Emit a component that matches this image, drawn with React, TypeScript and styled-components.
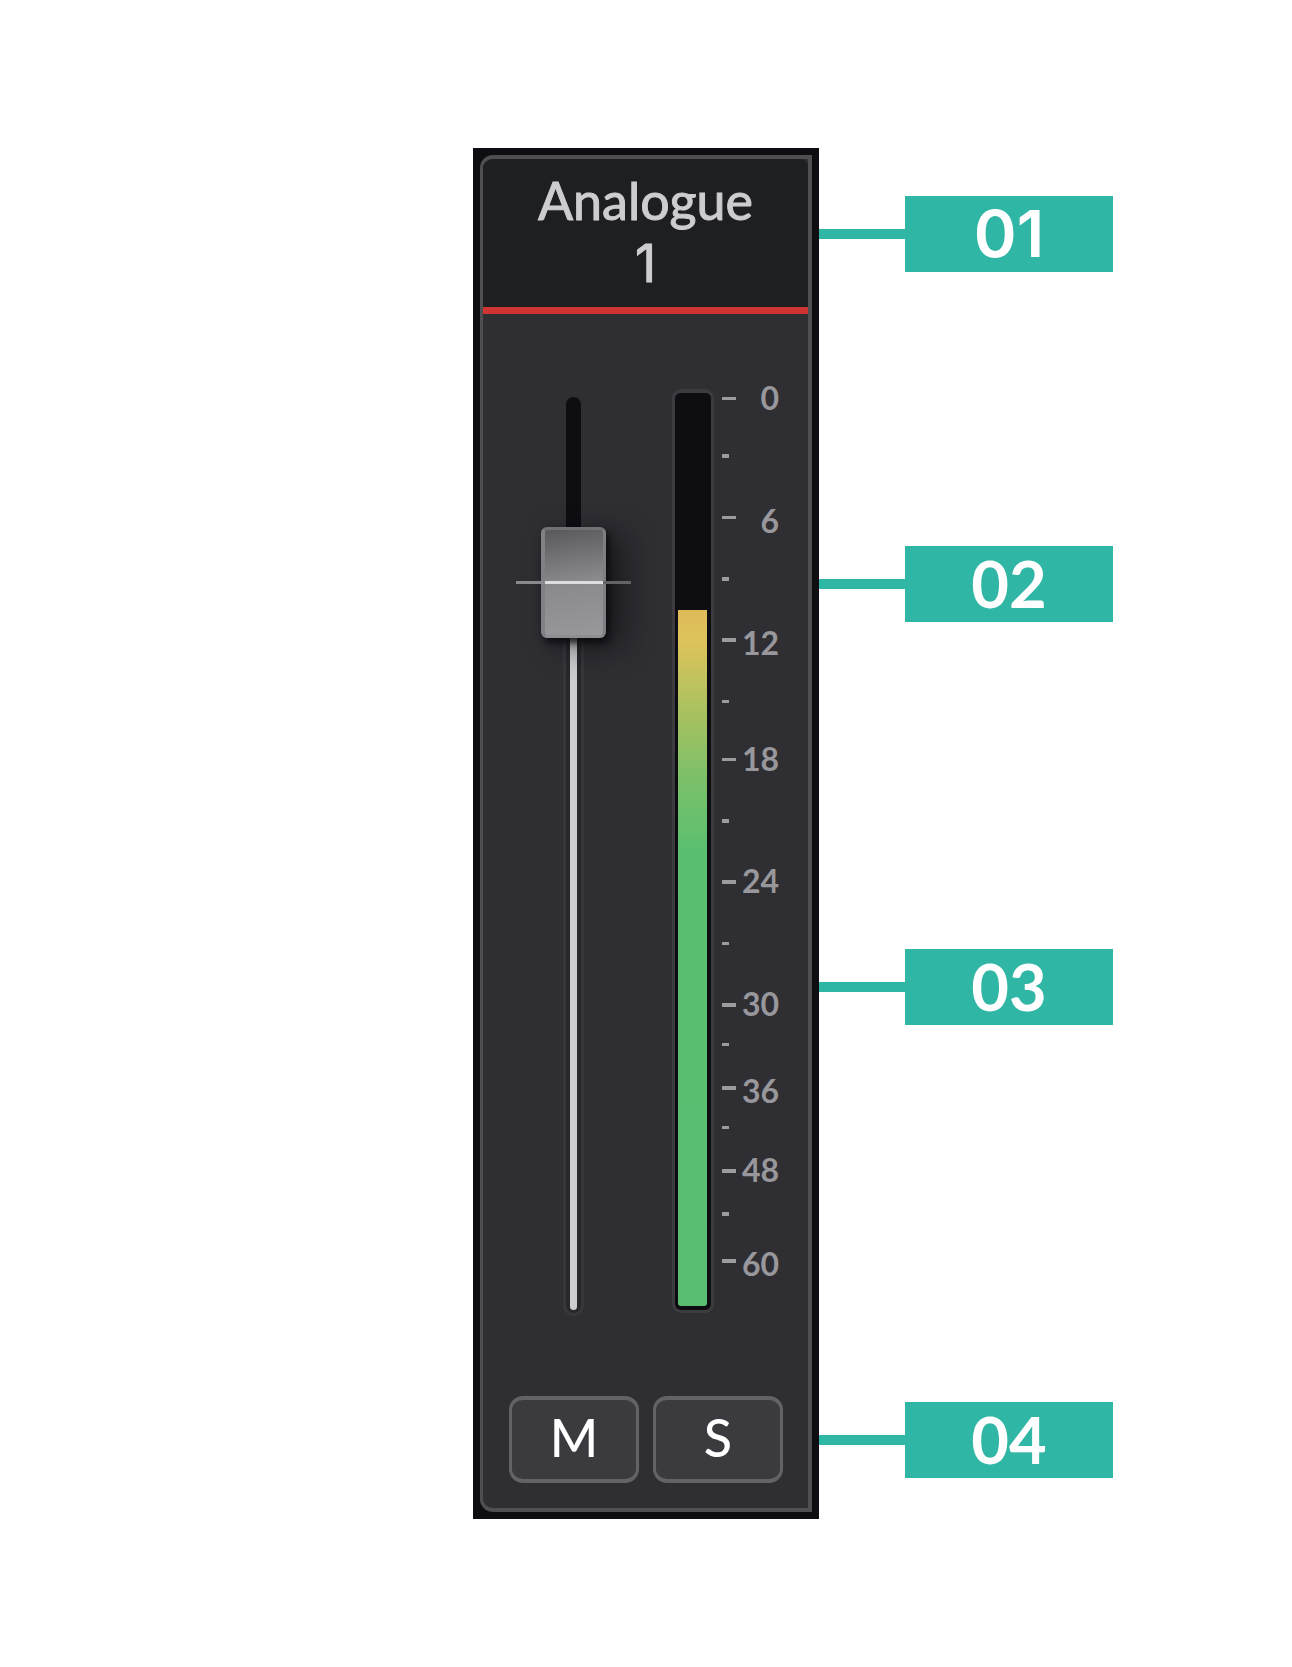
import React, { useState } from "react";
import styled, { createGlobalStyle } from "styled-components";

const GlobalStyle = createGlobalStyle`
  *, *::before, *::after { box-sizing: border-box; }
  body { margin: 0; background: #ffffff; }
`;

const TEXT = `Lato, "Open Sans", sans-serif`;
const PLAIN_ONE = `Inter, Roboto, sans-serif`;
const TEAL = "#30b6a5";

const Page = styled.main`
  display: grid;
  grid-template-columns: 1fr 346px 1fr;
  padding: 148px 0;
  font-family: ${TEXT};
`;

const Frame = styled.section`
  grid-column: 2;
  padding: 7px;
  background: #0e0d12;
`;

const Strip = styled.div`
  display: flex;
  flex-direction: column;
  border: solid #4f4e53;
  border-width: 4px 4px 4px 3px;
  border-radius: 13px 0 0 13px;
  background: #2f2e33;
  overflow: hidden;
`;

const Header = styled.header`
  height: 155px;
  padding-top: 10px;
  border-bottom: 7px solid #d03430;
  border-radius: 0 8px 0 0;
  background: #1e1f23;
  color: #cdcdcf;
  text-align: center;
`;

const Title = styled.h1`
  margin: 0;
  font-size: 52px;
  line-height: 62px;
  font-weight: 400;
  -webkit-text-stroke: 1px currentColor;
`;

const TitleNumber = styled.span`
  display: block;
  margin-top: 2px;
  font-family: ${PLAIN_ONE};
`;

const Controls = styled.div`
  display: flex;
  align-items: flex-end;
  padding: 75px 29px 0 33px;
`;

const FaderBox = styled.div`
  position: relative;
  width: 115px;
  height: 916px;
  margin-right: 41px;
`;

const Slot = styled.div`
  width: 15px;
  height: 100%;
  margin: 0 auto;
  border-radius: 8px;
  background: #0e0d12;
`;

const SlotFill = styled.div`
  position: absolute;
  left: 50px;
  right: 50px;
  bottom: 0;
  border-radius: 0 0 8px 8px;
  padding: 0 4px 3px;
  background: #28272c;
  box-shadow: 0 0 0 3px #37363b;

  &::before {
    content: "";
    display: block;
    height: 100%;
    border-radius: 0 0 4px 4px;
    background: #cdcdcf;
  }
`;

const Cap = styled.div`
  position: absolute;
  left: 25px;
  width: 65px;
  height: 111px;
  border: solid;
  border-width: 3px 3px 3px 4px;
  border-color: #717175 #7f7f83 #8e8e92 #818185;
  border-radius: 6px;
  background: linear-gradient(170deg, #59595d 0%, #8a8a8e 50%, #98979c 100%);
  box-shadow: 3px 5px 7px rgba(8, 8, 12, 0.8), 16px 8px 32px rgba(8, 8, 12, 0.6);
`;

const CapLine = styled.div`
  position: absolute;
  left: 0;
  right: 0;
  height: 3px;
  background: linear-gradient(
    to right,
    #8a898d 0 29px,
    #dddce0 29px 87px,
    #636267 87px
  );
`;

const FaderInput = styled.input`
  position: absolute;
  inset: 0;
  width: 100%;
  height: 100%;
  margin: 0;
  writing-mode: vertical-lr;
  direction: rtl;
  opacity: 0;
  cursor: pointer;
`;

const Meter = styled.div`
  display: flex;
  align-items: flex-end;
  width: 42px;
  height: 924px;
  margin-right: 8px;
  padding: 0 4px 4px 3px;
  border: solid #3c3b40;
  border-width: 4px 3px 3px;
  border-radius: 9px;
  background: #0e0d12;
`;

const MeterLevel = styled.div`
  width: 100%;
  border-radius: 0 0 3px 3px;
  background: linear-gradient(
    to bottom,
    #dfba59 0,
    #dec35b 30px,
    #9fc161 115px,
    #7bc069 170px,
    #5abf70 240px,
    #59be72 100%
  );
`;

const Scale = styled.div`
  display: flex;
  justify-content: space-between;
  align-self: flex-start;
  flex: 1;
`;

const Ticks = styled.div`
  padding-top: 8px;
`;

const TickRow = styled.div<{ $space: number }>`
  height: ${(p) => p.$space}px;
`;

const Tick = styled.div<{ $major?: boolean; $thick?: boolean }>`
  width: ${(p) => (p.$major ? 14 : 7)}px;
  height: ${(p) => (p.$thick ? 4 : 3)}px;
  background: #9c9ba0;
`;

const Labels = styled.div`
  margin-top: -11px;
  color: #98979c;
  font-size: 32px;
  line-height: 40px;
  font-weight: 700;
  text-align: right;
`;

const Label = styled.div<{ $space: number }>`
  height: ${(p) => p.$space}px;
`;

const Buttons = styled.div`
  display: flex;
  gap: 14px;
  padding: 83px 25px 25px 26px;
`;

const StripButton = styled.button`
  flex: 1;
  height: 87px;
  padding: 0 0 6px;
  border: solid #636266;
  border-width: 4px 3px 4px;
  border-radius: 14px;
  background: #3b3a3f;
  color: #ffffff;
  font-family: ${TEXT};
  font-size: 52px;
  line-height: 62px;
  font-weight: 500;
  cursor: pointer;
`;

const Callouts = styled.ol`
  grid-column: 3;
  margin: 0;
  padding: 0;
  list-style: none;
`;

const Callout = styled.li<{ $space: number }>`
  display: flex;
  align-items: center;
  padding-top: ${(p) => p.$space}px;
`;

const Leader = styled.span`
  width: 86px;
  height: 10px;
  background: ${TEAL};
`;

const Badge = styled.span<{ $plain?: boolean }>`
  width: 208px;
  height: 76px;
  background: ${TEAL};
  color: #ffffff;
  font-family: ${(p) => (p.$plain ? PLAIN_ONE : TEXT)};
  font-size: 65px;
  line-height: ${(p) => (p.$plain ? 76 : 74)}px;
  font-weight: ${(p) => (p.$plain ? 600 : 700)};
  text-align: center;
`;

const TICKS = [
  { space: 57, major: true },
  { space: 62, thick: true },
  { space: 61, major: true },
  { space: 61, thick: true },
  { space: 62, major: true, thick: true },
  { space: 58 },
  { space: 61, major: true },
  { space: 61, thick: true },
  { space: 62, major: true, thick: true },
  { space: 61 },
  { space: 40, major: true, thick: true },
  { space: 43 },
  { space: 40, major: true, thick: true },
  { space: 43 },
  { space: 43, major: true, thick: true },
  { space: 47, thick: true },
  { space: 4, major: true, thick: true },
];

const LABELS = [
  { text: "0", space: 123 },
  { text: "6", space: 122 },
  { text: "12", space: 116 },
  { text: "18", space: 122 },
  { text: "24", space: 123 },
  { text: "30", space: 87 },
  { text: "36", space: 79 },
  { text: "48", space: 94 },
  { text: "60", space: 40 },
];

const CALLOUTS = [
  { text: "01", space: 48, plain: true },
  { text: "02", space: 274 },
  { text: "03", space: 327 },
  { text: "04", space: 377 },
];

const FADER_TRAVEL = 805;
const CAP_HEIGHT = 111;

function Fader() {
  const [level, setLevel] = useState(675);
  const top = FADER_TRAVEL - level;
  return (
    <FaderBox>
      <Slot />
      <SlotFill style={{ top: top + CAP_HEIGHT / 2 }} />
      <Cap style={{ top }} />
      <CapLine style={{ top: top + 54 }} />
      <FaderInput
        type="range"
        aria-label="Level"
        min={0}
        max={FADER_TRAVEL}
        value={level}
        onChange={(e) => setLevel(Number(e.target.value))}
      />
    </FaderBox>
  );
}

export default function App() {
  const meterLevel = 696;
  return (
    <>
      <GlobalStyle />
      <Page>
        <Frame>
          <Strip>
            <Header>
              <Title>
                Analogue <TitleNumber>1</TitleNumber>
              </Title>
            </Header>
            <Controls>
              <Fader />
              <Meter>
                <MeterLevel style={{ height: meterLevel }} />
              </Meter>
              <Scale>
                <Ticks>
                  {TICKS.map((t, i) => (
                    <TickRow key={i} $space={t.space}>
                      <Tick $major={t.major} $thick={t.thick} />
                    </TickRow>
                  ))}
                </Ticks>
                <Labels>
                  {LABELS.map((l) => (
                    <Label key={l.text} $space={l.space}>
                      {l.text}
                    </Label>
                  ))}
                </Labels>
              </Scale>
            </Controls>
            <Buttons>
              <StripButton type="button">M</StripButton>
              <StripButton type="button">S</StripButton>
            </Buttons>
          </Strip>
        </Frame>
        <Callouts>
          {CALLOUTS.map((c) => (
            <Callout key={c.text} $space={c.space}>
              <Leader />
              <Badge $plain={c.plain}>{c.text}</Badge>
            </Callout>
          ))}
        </Callouts>
      </Page>
    </>
  );
}
